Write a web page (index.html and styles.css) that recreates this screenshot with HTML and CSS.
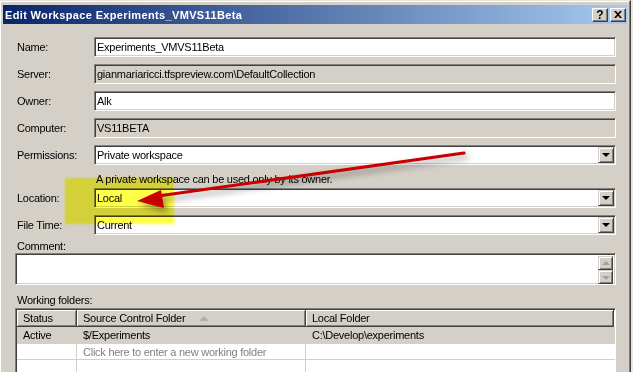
FILE: index.html
```html
<!DOCTYPE html>
<html lang="en">
  <head>
    <meta charset="UTF-8" />
    <title>Edit Workspace Experiments_VMVS11Beta</title>
    <link rel="stylesheet" href="styles.css">
  </head>
  <body>
    <div class="window">
      <!-- Title bar -->
      <div class="titlebar">
        <span class="title">Edit Workspace Experiments_VMVS11Beta</span>
        <div class="caption-buttons">
          <span class="cap-btn">?</span>
          <span class="cap-btn">
            <svg width="8" height="7" viewBox="0 0 8 7"><path d="M0 0h2l2 2.3L6 0h2L5 3.5 8 7H6L4 4.7 2 7H0l3-3.5z" fill="#000"/></svg>
          </span>
        </div>
      </div>

      <!-- Form -->
      <div class="form">
        <div class="row">
          <label>Name:</label>
          <div class="field">Experiments_VMVS11Beta</div>
        </div>
        <div class="row">
          <label>Server:</label>
          <div class="field readonly">gianmariaricci.tfspreview.com\DefaultCollection</div>
        </div>
        <div class="row">
          <label>Owner:</label>
          <div class="field">Alk</div>
        </div>
        <div class="row">
          <label>Computer:</label>
          <div class="field readonly">VS11BETA</div>
        </div>
        <div class="row">
          <label>Permissions:</label>
          <div class="field combo"><span class="value">Private workspace</span><span class="drop"></span></div>
        </div>
        <p class="help">A private workspace can be used only by its owner.</p>
        <div class="row">
          <label>Location:</label>
          <div class="field combo"><span class="value">Local</span><span class="drop"></span></div>
        </div>
        <div class="row">
          <label>File Time:</label>
          <div class="field combo"><span class="value">Current</span><span class="drop"></span></div>
        </div>

        <div class="caption comment-caption">Comment:</div>
        <div class="field comment">
          <span class="value"></span>
          <div class="scroll">
            <span class="sbtn"><i class="up"></i></span>
            <span class="sbtn"><i class="down"></i></span>
          </div>
        </div>

        <div class="caption folders-caption">Working folders:</div>
        <div class="grid">
          <div class="grid-row grid-head">
            <div class="cell c1">Status</div>
            <div class="cell c2">Source Control Folder <i class="sort"></i></div>
            <div class="cell c3">Local Folder</div>
          </div>
          <div class="grid-row active">
            <div class="cell c1">Active</div>
            <div class="cell c2">$/Experiments</div>
            <div class="cell c3">C:\Develop\experiments</div>
          </div>
          <div class="grid-row new">
            <div class="cell c1"></div>
            <div class="cell c2 hint">Click here to enter a new working folder</div>
            <div class="cell c3"></div>
          </div>
          <div class="grid-row">
            <div class="cell c1"></div>
            <div class="cell c2"></div>
            <div class="cell c3"></div>
          </div>
        </div>
      </div>

      <!-- Annotation: highlight and arrow -->
      <div class="highlight"></div>
      <svg class="arrow" width="633" height="372" viewBox="0 0 633 372">
        <line x1="464" y1="153" x2="158" y2="196" stroke="#c80000" stroke-width="3.2" stroke-linecap="round"/>
        <polygon points="137,201 161,190 164,208" fill="#c80000"/>
      </svg>
    </div>
  </body>
</html>
```

FILE: styles.css
```css
* {
  box-sizing: border-box;
  margin: 0;
  padding: 0;
}

body {
  background: #e8e6e1;
  font-family: 'Liberation Sans', Arial, sans-serif;
  font-size: 11px;
  letter-spacing: -0.25px;
  color: #000;
  overflow: hidden;
}

.window {
  position: relative;
  width: 631px;
  height: 372px;
  overflow: hidden;
  background: #d4d0c8;
  border-top: 1px solid #e6e4de;
  border-right: 1px solid #404040;
  box-shadow: inset -1px 0 #808080, inset 1px 1px #fff;
  padding: 4px 3px 0 3px;
}

/* title bar */
.titlebar {
  height: 19px;
  width: 624px;
  display: flex;
  align-items: center;
  justify-content: space-between;
  padding: 0 1px 0 2px;
  background: linear-gradient(to right, #0a246a, #a6caf0);
}

.title {
  color: #fff;
  font-weight: bold;
  font-size: 11px;
  letter-spacing: 0.35px;
}

.caption-buttons {
  display: flex;
  gap: 2px;
}

.cap-btn {
  width: 16px;
  height: 14px;
  display: flex;
  align-items: center;
  justify-content: center;
  background: #d4d0c8;
  border: 1px solid;
  border-color: #fff #404040 #404040 #fff;
  box-shadow: inset -1px -1px #808080;
  font-weight: bold;
  font-size: 12px;
  letter-spacing: 0;
  line-height: 1;
}

/* form */
.form {
  padding: 13px 0 0 12px;
}

.row {
  display: grid;
  grid-template-columns: 79px 522px;
  align-items: center;
  height: 20px;
  margin-bottom: 7px;
}

.row label {
  padding-left: 2px;
}

.field {
  height: 20px;
  background: #fff;
  border: 1px solid;
  border-color: #808080 #fff #fff #808080;
  box-shadow: inset 1px 1px #404040, inset -1px -1px #d4d0c8;
  padding: 3px 0 0 2px;
  white-space: nowrap;
  overflow: hidden;
}

.field.readonly {
  background: #d4d0c8;
}

.combo {
  display: flex;
  align-items: flex-start;
  padding: 0 0 0 2px;
}

.combo .value {
  flex: 1;
  padding-top: 3px;
}

.drop {
  width: 16px;
  height: 16px;
  margin: 1px 1px 0 0;
  background: #d4d0c8;
  border: 1px solid;
  border-color: #d4d0c8 #404040 #404040 #d4d0c8;
  box-shadow: inset 1px 1px #fff, inset -1px -1px #808080;
  position: relative;
}

.drop::after {
  content: "";
  position: absolute;
  left: 3px;
  top: 5px;
  border-left: 4px solid transparent;
  border-right: 4px solid transparent;
  border-top: 4px solid #000;
}

.help {
  margin: 0 0 0 81px;
  height: 16px;
  line-height: 14px;
}

.caption {
  padding-left: 2px;
  line-height: 14px;
}

.comment-caption {
  margin-top: -3px;
}

.comment {
  width: 601px;
  height: 32px;
  display: flex;
  justify-content: space-between;
  padding: 2px 2px 0 0;
}

.scroll {
  display: flex;
  flex-direction: column;
}

.sbtn {
  width: 15px;
  height: 14px;
  background: #d4d0c8;
  border: 1px solid;
  border-color: #d4d0c8 #404040 #404040 #d4d0c8;
  box-shadow: inset 1px 1px #fff, inset -1px -1px #808080;
  position: relative;
}

.sbtn i {
  position: absolute;
  left: 3px;
  top: 4px;
  border-left: 4px solid transparent;
  border-right: 4px solid transparent;
}

.sbtn .up {
  border-bottom: 4px solid #a0a0a0;
}

.sbtn .down {
  top: 5px;
  border-top: 4px solid #a0a0a0;
}

.folders-caption {
  margin-top: 8px;
}

/* working folders grid */
.grid {
  margin-top: 1px;
  width: 601px;
  height: 80px;
  background: #fff;
  border: 1px solid;
  border-color: #808080 #fff #fff #808080;
  box-shadow: inset 1px 1px #404040;
  padding: 1px 0 0 1px;
}

.grid-row {
  display: flex;
  height: 17px;
  border-bottom: 1px solid #d4d0c8;
}

.cell {
  padding: 2px 0 0 6px;
  white-space: nowrap;
  border-right: 1px solid #d4d0c8;
}

.c1 {
  width: 60px;
}

.c2 {
  width: 229px;
}

.c3 {
  flex: 1;
  border-right: none;
}

.grid-head {
  height: 17px;
  border-bottom: none;
}

.grid-head .cell {
  background: #d4d0c8;
  border-right: 1px solid #404040;
  border-bottom: 1px solid #404040;
  box-shadow: inset 1px 1px #fff, inset -1px -1px #808080;
  position: relative;
}

.grid-head .c3 {
  margin-right: 1px;
}

.sort {
  position: absolute;
  left: 122px;
  top: 6px;
  border-left: 5px solid transparent;
  border-right: 5px solid transparent;
  border-bottom: 5px solid #b4b0a8;
}

.active {
  background: #d4d0c8;
  height: 17px;
}

.active .cell {
  border-right-color: #d4d0c8;
}

.new {
  height: 16px;
}

.hint {
  color: #808080;
}

/* annotation overlay */
.highlight {
  position: absolute;
  left: 65px;
  top: 177px;
  width: 109px;
  height: 46px;
  background: #ffff48;
  mix-blend-mode: multiply;
  filter: blur(1px);
}

.arrow {
  position: absolute;
  left: 0;
  top: -1px;
  pointer-events: none;
  filter: drop-shadow(3px 4px 3px rgba(0, 0, 0, 0.4));
}
```
